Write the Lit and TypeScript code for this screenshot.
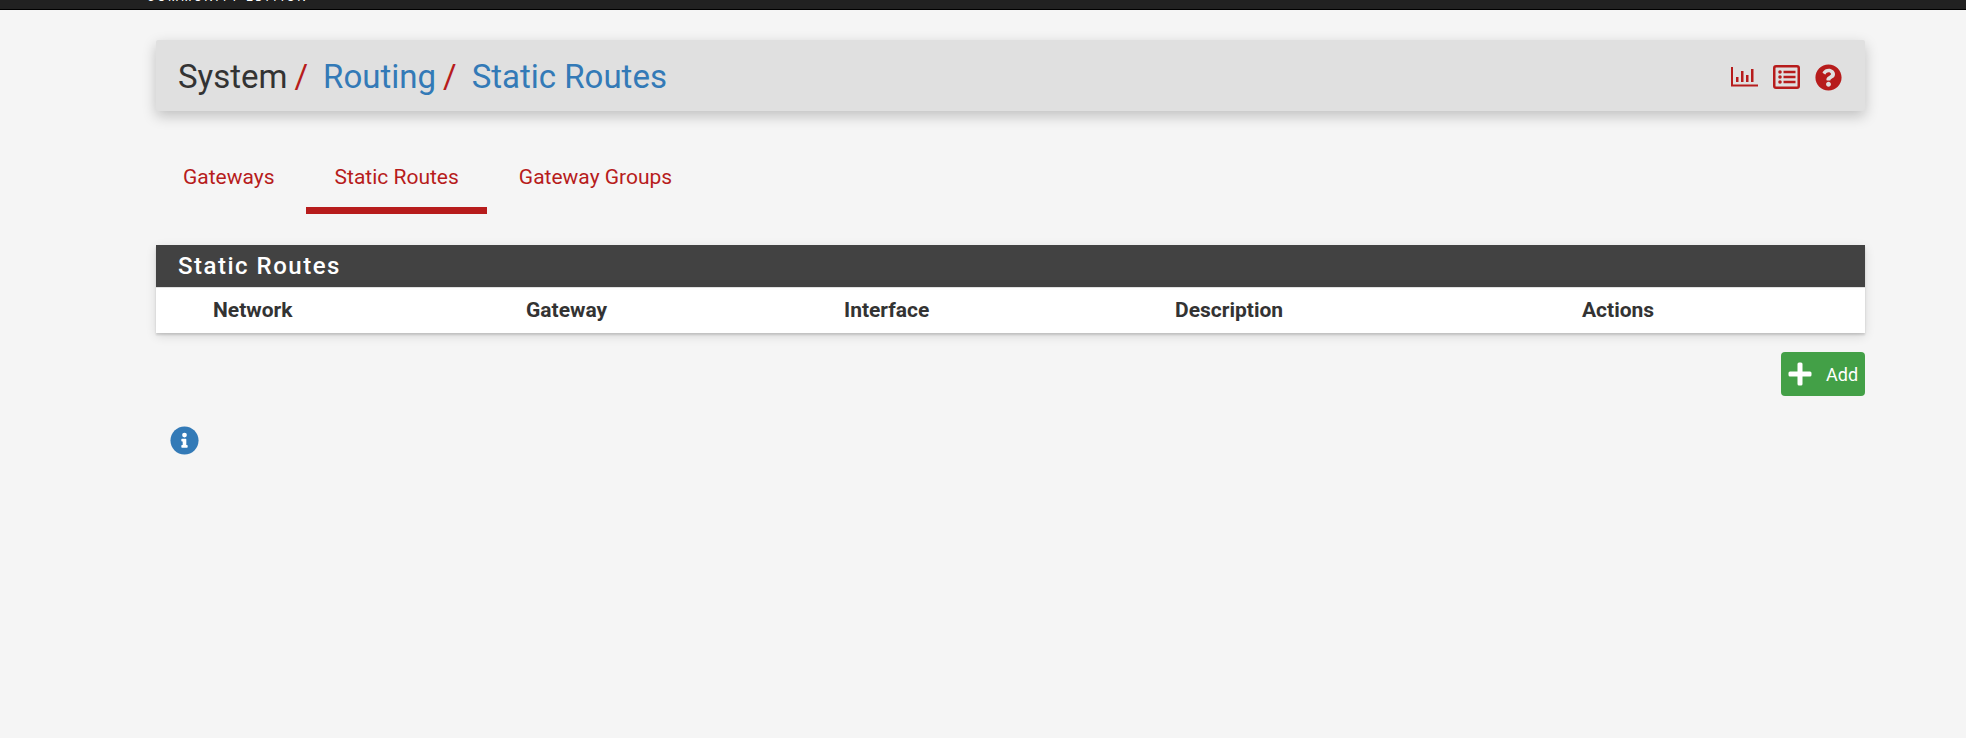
import { LitElement, html, css } from "lit";
import { customElement } from "lit/decorators.js";

@customElement("app-root")
export class AppRoot extends LitElement {
  static styles = css`
    :host { display: block; min-height: 738px; background: #f5f5f5; font-family: Roboto, sans-serif; color: #333; overflow: hidden; }
    .top { height: 10px; background: #212121; border-bottom: 1px solid #000; overflow: hidden; padding-left: 147px; box-sizing: border-box; }
    .brand { display: block; margin-top: -8px; height: 16px; line-height: 10px; font-size: 12px; color: #fff; letter-spacing: 2.5px; white-space: nowrap; }
    .wrap { padding: 30px 101px 0 156px; }
    .crumbs { height: 71px; box-sizing: border-box; background: #e0e0e0; border-radius: 2px; box-shadow: 0 5px 14px rgba(0,0,0,.22); display: flex; align-items: center; padding: 2px 23px 0 22px; font-size: 33px; }
    .crumbs a { color: #337ab7; }
    .sep { color: #b71c1c; margin: 0 15px 0 7px; }
    .icons { margin-left: auto; display: flex; align-items: center; gap: 15px; color: #b71c1c; padding-top: 1px; }
    .icons svg { display: block; fill: currentColor; }
    .tabs { display: flex; margin: 41px 0 0 -1.5px; gap: 3px; }
    .tab { padding: 0 28.5px; height: 62px; line-height: 50px; box-sizing: border-box; font-size: 21px; color: #b71c1c; border-bottom: 7px solid transparent; }
    .tab.on { border-bottom-color: #b71c1c; }
    .panel { margin-top: 31px; background: #fff; box-shadow: 0 2px 2px rgba(0,0,0,.14), 0 3px 10px rgba(0,0,0,.12); }
    .head { background: #424242; color: #fff; height: 42px; line-height: 42px; padding-left: 22px; font-size: 24px; font-weight: 500; letter-spacing: 1.5px; border-bottom: 1px solid #e0e0e0; }
    .cols { display: grid; grid-template-columns: 313px 318px 331px 407px 1fr; padding: 0 0 1px 57px; height: 45px; box-sizing: border-box; align-items: center; font-size: 21px; font-weight: 700; }
    .foot { display: flex; justify-content: flex-end; margin-top: 19px; }
    .add { width: 84px; height: 44px; box-sizing: border-box; background: #43a047; border-radius: 4px; color: #fff; display: flex; align-items: center; padding-left: 7px; gap: 14px; font-size: 18px; }
    .add svg { display: block; fill: #fff; }
    .info { margin: 30px 0 0 14px; }
    .info svg { display: block; }
  `;

  render() {
    return html`
      <div class="top"><span class="brand">COMMUNITY EDITION</span></div>
      <div class="wrap">
        <div class="crumbs">
          <span>System</span><span class="sep">/</span><a>Routing</a><span class="sep">/</span><a>Static Routes</a>
          <div class="icons">
            <svg width="27" height="24" viewBox="0 0 27 24"><path d="M0 2h2v17.500h25v2H0zM5 12h2.500v5H5zM10 6h2.500v11H10zM15 10h2.500v7H15zM20 4h2.500v13H20z"/></svg>
            <svg width="27" height="24" viewBox="0 0 27 24"><path fill-rule="evenodd" d="M3 0h21a3 3 0 0 1 3 3v18a3 3 0 0 1-3 3H3a3 3 0 0 1-3-3V3a3 3 0 0 1 3-3zm0 2.500a.5.500 0 0 0-.5.500v18a.5.500 0 0 0 .5.500h21a.5.500 0 0 0 .5-.5V3a.5.500 0 0 0-.5-.5z"/><circle cx="7" cy="7" r="1.800"/><circle cx="7" cy="12" r="1.800"/><circle cx="7" cy="17" r="1.800"/><path d="M10.500 5.800h12v2.400h-12zM10.500 10.800h12v2.400h-12zM10.500 15.800h12v2.400h-12z"/></svg>
            <svg width="27" height="27" viewBox="0 0 512 512"><path d="M504 256c0 137-111 248-248 248S8 393 8 256 119 8 256 8s248 111 248 248zM262.700 90c-54.500 0-89.300 23-116.500 63.800-3.500 5.300-2.400 12.400 2.700 16.300l34.700 26.300c5.200 3.900 12.600 3 16.700-2.100 17.900-22.700 30.100-35.800 57.300-35.800 20.400 0 45.700 13.100 45.700 32.900 0 15-12.400 22.700-32.500 34C247.100 238.500 216 254.900 216 296v4c0 6.600 5.400 12 12 12h56c6.600 0 12-5.400 12-12v-1.300c0-28.500 83.200-29.700 83.200-106.700 0-58-60.200-102-116.500-102zM256 338c-25.400 0-46 20.600-46 46s20.600 46 46 46 46-20.600 46-46-20.600-46-46-46z"/></svg>
          </div>
        </div>
        <div class="tabs">
          <div class="tab">Gateways</div>
          <div class="tab on">Static Routes</div>
          <div class="tab">Gateway Groups</div>
        </div>
        <div class="panel">
          <div class="head">Static Routes</div>
          <div class="cols"><span>Network</span><span>Gateway</span><span>Interface</span><span>Description</span><span>Actions</span></div>
        </div>
        <div class="foot">
          <div class="add">
            <svg width="24" height="24" viewBox="0 0 24 24"><path d="M9.500 2a1.500 1.500 0 0 1 1.500-1.500h2A1.500 1.500 0 0 1 14.500 2v7.500H22a1.500 1.500 0 0 1 1.500 1.500v2a1.500 1.500 0 0 1-1.500 1.500h-7.500V22a1.500 1.500 0 0 1-1.500 1.500h-2A1.500 1.500 0 0 1 9.500 22v-7.500H2A1.500 1.500 0 0 1 .5 13v-2A1.500 1.500 0 0 1 2 9.500h7.500z"/></svg>
            <span>Add</span>
          </div>
        </div>
        <div class="info">
          <svg width="29" height="29" viewBox="0 0 512 512"><path fill="#337ab7" d="M256 8C119 8 8 119 8 256s111 248 248 248 248-111 248-248S393 8 256 8z"/><path fill="#fff" d="M256 118a42 42 0 1 1 0 84 42 42 0 0 1 0-84zM312 372c0 6.600-5.400 12-12 12h-88c-6.600 0-12-5.400-12-12v-24c0-6.600 5.400-12 12-12h12v-64h-12c-6.600 0-12-5.400-12-12v-24c0-6.600 5.400-12 12-12h64c6.600 0 12 5.400 12 12v100h12c6.600 0 12 5.400 12 12z"/></svg>
        </div>
      </div>
    `;
  }
}
